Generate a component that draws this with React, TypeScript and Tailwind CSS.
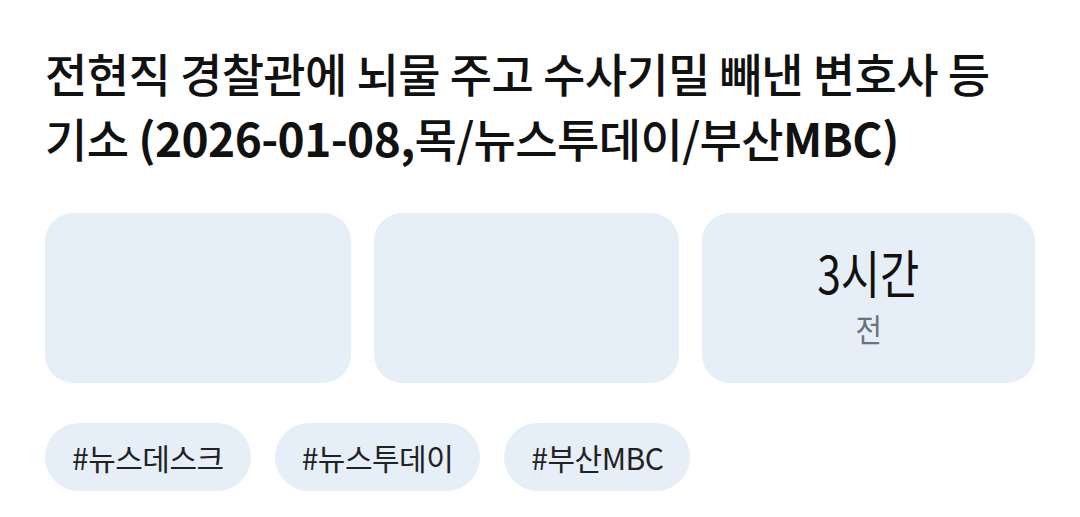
import React from 'react';

const tags = ['#뉴스데스크', '#뉴스투데이', '#부산MBC'];

export default function App() {
  return (
    <div
      className="w-[1080px] h-[517px] bg-white overflow-hidden px-[45px] pt-[40px]"
      style={{ fontFamily: '"Noto Sans CJK KR", "Noto Sans", sans-serif' }}
    >
      <h1 className="text-[46px] leading-[65px] font-medium text-[#111] tracking-[-0.6px] pr-[10px] break-keep">
        전현직 경찰관에 뇌물 주고 수사기밀 빼낸 변호사 등 기소{' '}
        <span className="font-bold">(2026-01-08,</span>목/뉴스투데이/부산<span className="font-bold">MBC)</span>
      </h1>

      <div className="mt-[43px] flex gap-[23px] h-[170px]">
        <div className="w-[306px] rounded-[28px] bg-[#e6eef8]" />
        <div className="w-[305px] rounded-[28px] bg-[#e6eef8]" />
        <div className="flex-1 rounded-[28px] bg-[#e6eef8] flex flex-col items-center pt-[26px]">
          <div className="text-[52px] leading-[66px] text-[#111] scale-x-[0.82]">3시간</div>
          <div className="text-[32px] leading-[46px] text-[#6b7280] scale-x-[0.9]">전</div>
        </div>
      </div>

      <div className="mt-[40px] flex gap-[24px]">
        {tags.map((t) => (
          <div
            key={t}
            className="h-[68px] px-[27px] rounded-full bg-[#e6eef8] flex items-center text-[30px] text-[#222] tracking-[-0.5px]"
          >
            {t}
          </div>
        ))}
      </div>
    </div>
  );
}
